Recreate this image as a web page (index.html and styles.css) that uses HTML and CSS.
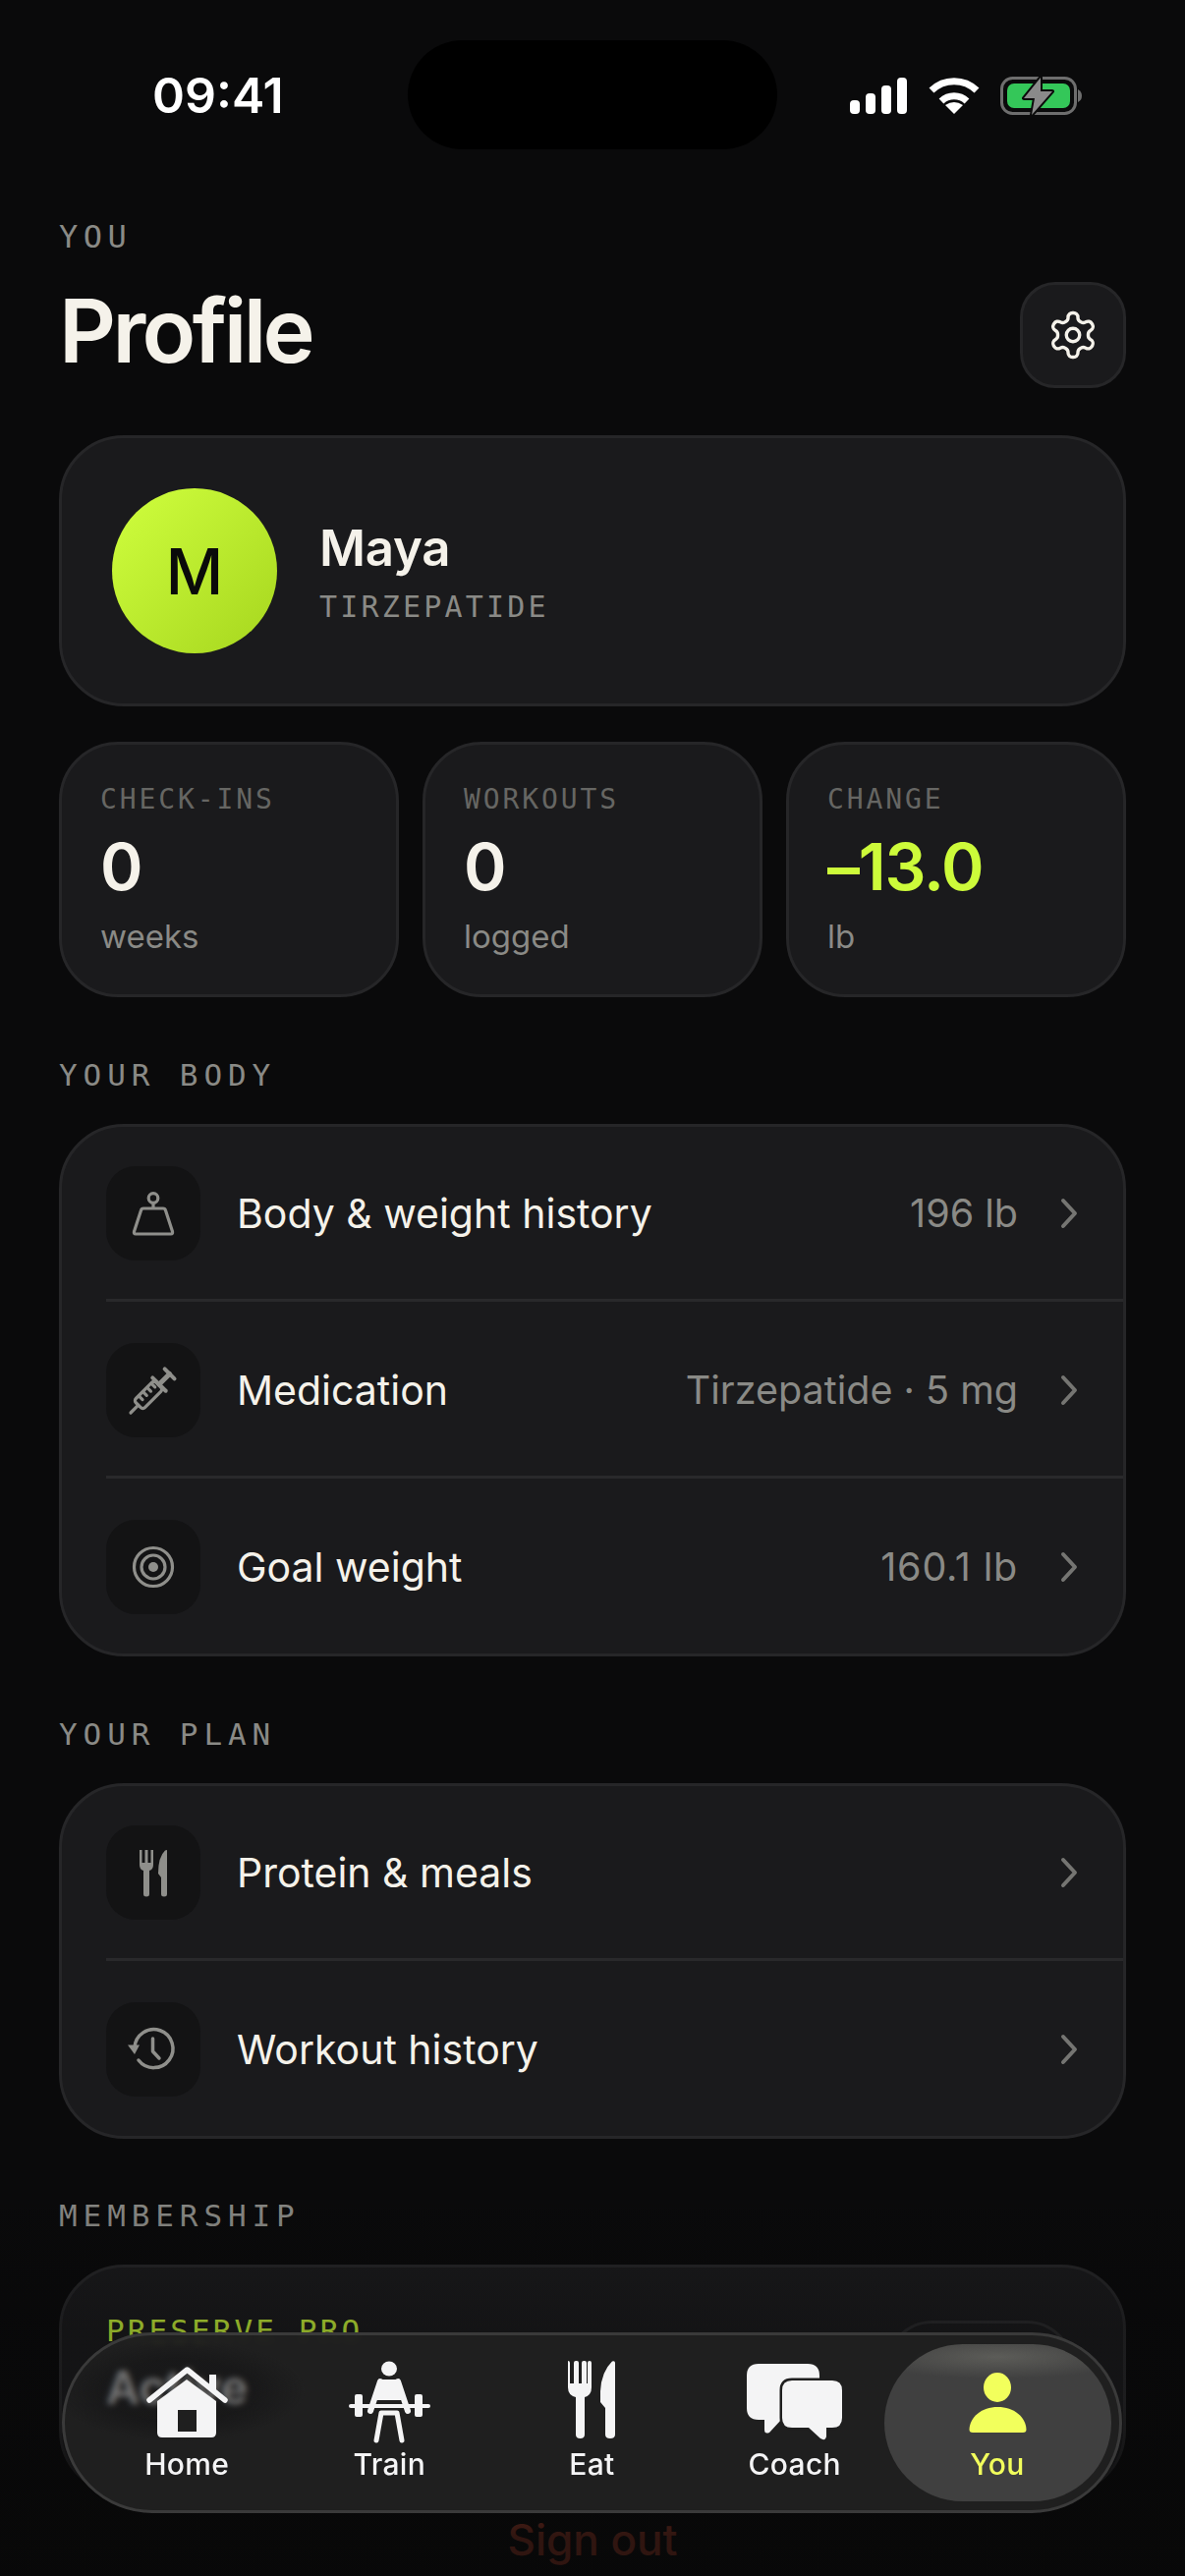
FILE: index.html
```html
<!DOCTYPE html>
<html lang="en">
<head>
  <meta charset="UTF-8">
  <meta name="viewport" content="width=device-width, initial-scale=1.0">
  <title>Profile</title>
  <link rel="stylesheet" href="styles.css">
</head>
<body>
  <div class="screen">
    <!-- Status bar -->
    <div class="status">
      <div class="time">09:41</div>
      <div class="island"></div>
      <svg class="status-icons" width="238" height="40" viewBox="0 0 238 40">
        <rect x="0" y="24" width="10" height="14" rx="4" fill="#fff"/>
        <rect x="16" y="17" width="10" height="21" rx="4" fill="#fff"/>
        <rect x="32" y="9" width="10" height="29" rx="4" fill="#fff"/>
        <rect x="48" y="1" width="10" height="37" rx="4" fill="#fff"/>
        <path d="M83 14A33 33 0 0 1 129 14M93 25A19 19 0 0 1 119 25" fill="none" stroke="#fff" stroke-width="7"/>
        <path d="M97 29Q106 23 115 29L106 38Z" fill="#fff"/>
        <rect x="154.5" y="1.5" width="75" height="36" rx="11" fill="none" stroke="#6e6e6e" stroke-width="3"/>
        <rect x="160" y="7" width="64" height="25" rx="7" fill="#34c759"/>
        <path d="M232 13Q236 15 236 19.500Q236 24 232 26Z" fill="#6e6e6e"/>
        <path d="M194 1L177 22H188L185 39L206 15H194Z" fill="#8a8a8a" stroke="#0a0a0a" stroke-width="4" stroke-linejoin="round" paint-order="stroke"/>
      </svg>
    </div>

    <!-- Page title -->
    <header class="page-head">
      <div>
        <div class="mono eyebrow">YOU</div>
        <h1>Profile</h1>
      </div>
      <div class="gear-btn">
        <svg width="54" height="54" viewBox="0 0 24 24" fill="none" stroke="#f5f2ea" stroke-width="1.5" stroke-linecap="round" stroke-linejoin="round">
          <path d="M12.220 2h-.44a2 2 0 0 0-2 2v.18a2 2 0 0 1-1 1.730l-.43.25a2 2 0 0 1-2 0l-.15-.08a2 2 0 0 0-2.730.73l-.22.38a2 2 0 0 0 .73 2.730l.15.1a2 2 0 0 1 1 1.720v.51a2 2 0 0 1-1 1.740l-.15.09a2 2 0 0 0-.73 2.730l.22.38a2 2 0 0 0 2.730.73l.15-.08a2 2 0 0 1 2 0l.43.25a2 2 0 0 1 1 1.730V20a2 2 0 0 0 2 2h.44a2 2 0 0 0 2-2v-.18a2 2 0 0 1 1-1.730l.43-.25a2 2 0 0 1 2 0l.15.08a2 2 0 0 0 2.730-.73l.22-.39a2 2 0 0 0-.73-2.730l-.15-.08a2 2 0 0 1-1-1.740v-.5a2 2 0 0 1 1-1.740l.15-.09a2 2 0 0 0 .73-2.730l-.22-.38a2 2 0 0 0-2.730-.73l-.15.08a2 2 0 0 1-2 0l-.43-.25a2 2 0 0 1-1-1.730V4a2 2 0 0 0-2-2z"/>
          <circle cx="12" cy="12" r="3"/>
        </svg>
      </div>
    </header>

    <!-- Profile card -->
    <section class="card profile-card">
      <div class="avatar">M</div>
      <div>
        <div class="name">Maya</div>
        <div class="mono drug">TIRZEPATIDE</div>
      </div>
    </section>

    <!-- Stats -->
    <section class="stats">
      <div class="card stat">
        <div class="mono stat-label">CHECK-INS</div>
        <div class="stat-value">0</div>
        <div class="stat-unit">weeks</div>
      </div>
      <div class="card stat">
        <div class="mono stat-label">WORKOUTS</div>
        <div class="stat-value">0</div>
        <div class="stat-unit">logged</div>
      </div>
      <div class="card stat">
        <div class="mono stat-label">CHANGE</div>
        <div class="stat-value lime">–13.0</div>
        <div class="stat-unit">lb</div>
      </div>
    </section>

    <!-- Your body -->
    <h2 class="mono section-label">YOUR BODY</h2>
    <section class="card list">
      <div class="row">
        <div class="row-icon">
          <svg width="96" height="96" viewBox="0 0 96 96" fill="none" stroke="#8f8f8b" stroke-width="3.200" stroke-linejoin="round">
            <circle cx="48" cy="32.500" r="4.800"/>
            <path d="M48 37.500V43M38 43H58Q60 43 60.500 45L67.500 66.500Q68 69 66 69H30Q28 69 28.500 66.500L35.500 45Q36 43 38 43Z"/>
          </svg>
        </div>
        <span class="row-title">Body &amp; weight history</span>
        <span class="row-value">196 lb</span>
        <svg class="chevron" width="18" height="32" viewBox="0 0 18 32"><path d="M3 3L15 16L3 29"/></svg>
      </div>
      <div class="row">
        <div class="row-icon">
          <svg width="96" height="96" viewBox="0 0 96 96" fill="none" stroke="#8f8f8b" stroke-width="3.200" stroke-linecap="round" stroke-linejoin="round">
            <g transform="translate(25 71) rotate(-45)">
              <path d="M0 0H11"/>
              <rect x="11" y="-6.500" width="29" height="13" rx="3"/>
              <path d="M18 -6V-1M24 -6V-1M30 -6V-1M36 -6V-1"/>
              <path d="M41 -9.500V9.500" stroke-width="4"/>
              <path d="M41 0H56" stroke-width="5"/>
              <path d="M56 -7V7" stroke-width="4"/>
            </g>
          </svg>
        </div>
        <span class="row-title">Medication</span>
        <span class="row-value">Tirzepatide · 5 mg</span>
        <svg class="chevron" width="18" height="32" viewBox="0 0 18 32"><path d="M3 3L15 16L3 29"/></svg>
      </div>
      <div class="row">
        <div class="row-icon">
          <svg width="96" height="96" viewBox="0 0 96 96" fill="none" stroke="#8f8f8b" stroke-width="3.200">
            <circle cx="48" cy="48" r="19.500"/>
            <circle cx="48" cy="48" r="12"/>
            <circle cx="48" cy="48" r="5" fill="#8f8f8b" stroke="none"/>
          </svg>
        </div>
        <span class="row-title">Goal weight</span>
        <span class="row-value row-value-wide">160.1 lb</span>
        <svg class="chevron" width="18" height="32" viewBox="0 0 18 32"><path d="M3 3L15 16L3 29"/></svg>
      </div>
    </section>

    <!-- Your plan -->
    <h2 class="mono section-label">YOUR PLAN</h2>
    <section class="card list">
      <div class="row">
        <div class="row-icon">
          <svg width="96" height="96" viewBox="0 0 96 96" fill="#8f8f8b">
            <path d="M34 25H36.500V38H39.500V25H42.500V38H45.500V25H48V40Q48 45 44 46V70Q44 72.500 41 72.500Q38 72.500 38 70V46Q34 45 34 40Z"/>
            <path d="M62 25V70Q62 72.500 59 72.500Q56 72.500 56 70V53L53 49Q53 32 60 25.500Q61 25 62 25Z"/>
          </svg>
        </div>
        <span class="row-title">Protein &amp; meals</span>
        <svg class="chevron" width="18" height="32" viewBox="0 0 18 32"><path d="M3 3L15 16L3 29"/></svg>
      </div>
      <div class="row">
        <div class="row-icon">
          <svg width="96" height="96" viewBox="0 0 96 96" fill="none" stroke="#8f8f8b" stroke-width="3.500" stroke-linecap="round" stroke-linejoin="round">
            <path d="M29 46A19.500 19.500 0 1 1 33 59"/>
            <path d="M22 43.500H34L29 53Z" fill="#8f8f8b" stroke="none"/>
            <path d="M47.500 37V50L54 57"/>
          </svg>
        </div>
        <span class="row-title">Workout history</span>
        <svg class="chevron" width="18" height="32" viewBox="0 0 18 32"><path d="M3 3L15 16L3 29"/></svg>
      </div>
    </section>

    <!-- Membership, mostly behind the tab bar -->
    <h2 class="mono section-label member-label">MEMBERSHIP</h2>
    <section class="card member">
      <div>
        <div class="mono plan-name">PRESERVE PRO</div>
        <div class="plan-state">Active</div>
      </div>
      <div class="manage">Manage</div>
    </section>

    <div class="sign-out">Sign out</div>

    <div class="fade"></div>

    <!-- Tab bar -->
    <nav class="tabbar">
      <div class="tab">
        <svg width="100" height="90" viewBox="0 0 100 90">
          <path d="M50 22L80 44V76Q80 81 75 81H25Q20 81 20 76V44Z" fill="#f4f4f5"/>
          <path d="M73 17H80V34H73Z" fill="#f4f4f5"/>
          <path d="M12 43L50.500 12L89 43" fill="none" stroke="#f4f4f5" stroke-width="5.500" stroke-linecap="round" stroke-linejoin="round"/>
          <rect x="41" y="53" width="19" height="22" fill="#1f1f1f"/>
        </svg>
        <span>Home</span>
      </div>
      <div class="tab">
        <svg width="100" height="90" viewBox="0 0 100 90" fill="none" stroke="#f4f4f5" stroke-linecap="round" stroke-linejoin="round">
          <ellipse cx="50" cy="11" rx="8" ry="7.500" fill="#f4f4f5" stroke="none"/>
          <path d="M42 22H58L63 34V43H37V34Z" fill="#f4f4f5" stroke="none"/>
          <path d="M41 24L31 54M59 24L69 54" stroke-width="6"/>
          <path d="M11 49H90" stroke-width="4"/>
          <rect x="15" y="37" width="8" height="23" rx="2" fill="#f4f4f5" stroke="none"/>
          <rect x="76" y="37" width="8" height="23" rx="2" fill="#f4f4f5" stroke="none"/>
          <path d="M42 56L37 84M58 56L63 84M42 56H58" stroke-width="5"/>
        </svg>
        <span>Train</span>
      </div>
      <div class="tab">
        <svg width="100" height="90" viewBox="0 0 100 90" fill="#f4f4f5">
          <path d="M26 3Q28 3 28 5V26H32V5Q32 3 34 3H35Q37 3 37 5V26H40V5Q40 3 42 3H43Q45 3 45 5V26H46V5Q46 3 48 3Q50 3 50 5V30Q50 38 43 40V78Q43 82 38.500 82Q34 82 34 78V40Q26 38 26 30Z"/>
          <path d="M74 5V78Q74 82 69 82Q64 82 64 78V51L59 45V34Q60 14 71 3.500Q74 2.500 74 5Z"/>
        </svg>
        <span>Eat</span>
      </div>
      <div class="tab">
        <svg width="100" height="90" viewBox="0 0 100 90" fill="#f4f4f5">
          <path d="M13 6H63Q75 6 75 18V51Q75 63 63 63H36L24 76Q19 78 19 73V63H13Q1 63 1 51V18Q1 6 13 6Z"/>
          <path d="M47 23H88Q98 23 98 33V61Q98 71 88 71H82V80Q81 85 76 82L64 71H47Q37 71 37 61V33Q37 23 47 23Z" stroke="#1f1f1f" stroke-width="5" paint-order="stroke"/>
        </svg>
        <span>Coach</span>
      </div>
      <div class="tab active">
        <svg width="100" height="90" viewBox="0 0 100 90" fill="#f2ff5c">
          <ellipse cx="50" cy="30" rx="14" ry="15"/>
          <path d="M21.500 73C22 60 34 50 50.500 50C67 50 79 60 79.500 73Q79.500 76 76 76H25Q21.500 76 21.500 73Z"/>
        </svg>
        <span>You</span>
      </div>
    </nav>
  </div>
</body>
</html>
```

FILE: styles.css
```css
html, body {
  margin: 0;
  padding: 0;
  background-color: #0a0a0b;
}
.screen {
  position: relative;
  width: 1206px;
  height: 2622px;
  overflow: hidden;
  padding: 0 60px;
  box-sizing: border-box;
  font-family: 'Inter', sans-serif;
  color: #f5f2ea;
}
.mono {
  font-family: 'DejaVu Sans Mono', monospace;
}

/* status bar */
.status {
  display: grid;
  grid-template-columns: 355px 376px 1fr;
  align-items: center;
  margin: 0 -60px 0 0;
  padding-top: 41px;
}
.time {
  padding-left: 95px;
  font-size: 50px;
  font-weight: 600;
  color: #fff;
}
.island {
  height: 111px;
  border-radius: 56px;
  background-color: #000;
}
.status-icons {
  margin-left: 74px;
  margin-top: 2px;
}

/* title */
.page-head {
  display: flex;
  justify-content: space-between;
  align-items: flex-end;
  margin-top: 69px;
}
.eyebrow {
  font-size: 32px;
  line-height: 40px;
  letter-spacing: 5.500px;
  color: #8a8a86;
}
h1 {
  margin: 26px 0 0;
  padding-bottom: 8px;
  font-size: 90px;
  line-height: 100px;
  font-weight: 600;
  letter-spacing: -3.6px;
}
.gear-btn {
  display: flex;
  align-items: center;
  justify-content: center;
  width: 108px;
  height: 108px;
  box-sizing: border-box;
  border: 3px solid #262628;
  border-radius: 36px;
  background-color: #1a1a1c;
}

/* cards */
.card {
  box-sizing: border-box;
  border: 3px solid #262628;
  border-radius: 66px;
  background-color: #1a1a1c;
}
.profile-card {
  display: flex;
  align-items: center;
  gap: 43px;
  margin-top: 48px;
  padding: 51px;
}
.avatar {
  display: flex;
  align-items: center;
  justify-content: center;
  width: 168px;
  height: 168px;
  border-radius: 50%;
  background: linear-gradient(135deg, #d0ff3e, #a6d61e);
  color: #0a0a0a;
  font-size: 64px;
  font-weight: 500;
}
.name {
  margin-top: 4px;
  font-size: 51px;
  line-height: 60px;
  font-weight: 600;
  letter-spacing: -0.3px;
}
.drug {
  margin-top: 10px;
  font-size: 30px;
  line-height: 40px;
  letter-spacing: 3.200px;
  color: #8a8a86;
}

/* stats */
.stats {
  display: grid;
  grid-template-columns: repeat(3, 1fr);
  gap: 24px;
  margin-top: 36px;
}
.stat {
  padding: 38px 20px 37px 39px;
  border-radius: 60px;
}
.stat-label {
  font-size: 28px;
  line-height: 36px;
  letter-spacing: 2.900px;
  color: #666663;
}
.stat-value {
  margin-top: 14px;
  font-size: 66px;
  line-height: 72px;
  font-weight: 600;
  letter-spacing: -1.200px;
}
.lime {
  color: #cdfb3a;
}
.stat-unit {
  margin-top: 13px;
  font-size: 33px;
  line-height: 44px;
  color: #8a8a86;
}

/* lists */
.section-label {
  margin: 59px 0 30px;
  font-size: 31px;
  line-height: 40px;
  font-weight: 400;
  letter-spacing: 5.900px;
  color: #8a8a86;
}
.member-label {
  margin-top: 58px;
}
.list {
  overflow: hidden;
}
.row {
  display: flex;
  align-items: center;
  margin-left: 45px;
  padding: 40px 46px 39px 0;
}
.row + .row {
  padding-top: 42px;
  border-top: 3px solid #29292b;
}
.row:last-child {
  padding-bottom: 40px;
}
.row-icon {
  width: 96px;
  height: 96px;
  flex-shrink: 0;
  border-radius: 30px;
  background-color: #131314;
}
.row-title {
  flex: 1;
  margin-left: 37px;
  font-size: 41px;
  color: #f5f2ea;
}
.row-value {
  margin-right: 43px;
  font-size: 39.500px;
  color: #8a8a86;
}
.row-value-wide {
  letter-spacing: 0.8px;
}
.chevron {
  flex-shrink: 0;
  fill: none;
  stroke: #757572;
  stroke-width: 4;
  stroke-linecap: round;
  stroke-linejoin: round;
}

/* membership */
.member {
  display: flex;
  justify-content: space-between;
  height: 235px;
  padding: 44px 50px 0 45px;
}
.plan-name {
  font-size: 31px;
  line-height: 40px;
  letter-spacing: 3.100px;
  color: #c6f038;
}
.plan-state {
  margin-top: 16px;
  font-size: 47px;
  line-height: 44px;
  font-weight: 600;
  color: #fff;
}
.manage {
  display: flex;
  align-items: center;
  justify-content: center;
  width: 192px;
  height: 96px;
  margin-top: 10px;
  box-sizing: border-box;
  border: 3px solid #2a2a2c;
  border-radius: 48px;
  font-size: 33px;
}
.sign-out {
  margin-top: 20px;
  font-size: 44px;
  line-height: 50px;
  font-weight: 500;
  text-align: center;
  color: #ff5a3c;
}

/* darkens what scrolls under the tab bar */
.fade {
  position: absolute;
  left: 0;
  right: 0;
  bottom: 0;
  height: 400px;
  background: linear-gradient(to bottom, rgba(6, 6, 6, 0), rgba(6, 6, 6, 0.3) 37%, rgba(6, 6, 6, 0.3) 55%, rgba(8, 8, 8, 0.84) 90%);
}

/* tab bar */
.tabbar {
  position: absolute;
  left: 63px;
  top: 2374px;
  display: grid;
  grid-template-columns: repeat(5, 1fr);
  width: 1079px;
  height: 184px;
  box-sizing: border-box;
  padding: 23px 21px 0;
  border: 3px solid #3a3a3a;
  border-radius: 92px;
  background: radial-gradient(ellipse 130px 52px at 115px 56px, rgba(32, 32, 32, 0.42) 60%, rgba(32, 32, 32, 0.97) 100%), rgba(32, 32, 32, 0);
  backdrop-filter: blur(3px);
}
.tab {
  position: relative;
  display: flex;
  flex-direction: column;
  align-items: center;
  font-size: 30px;
  line-height: 36px;
  font-weight: 500;
  letter-spacing: 0.3px;
  color: #f4f4f5;
}
.tab svg, .tab span {
  position: relative;
}
.tab.active {
  color: #f2ff5c;
}
.tab.active::before {
  content: "";
  position: absolute;
  left: -12px;
  right: -13px;
  top: -14px;
  bottom: 9px;
  border-radius: 80px;
  background: radial-gradient(ellipse 60% 14% at 50% 8%, #5c5c58, rgba(92, 92, 88, 0)), #404040;
}
```
